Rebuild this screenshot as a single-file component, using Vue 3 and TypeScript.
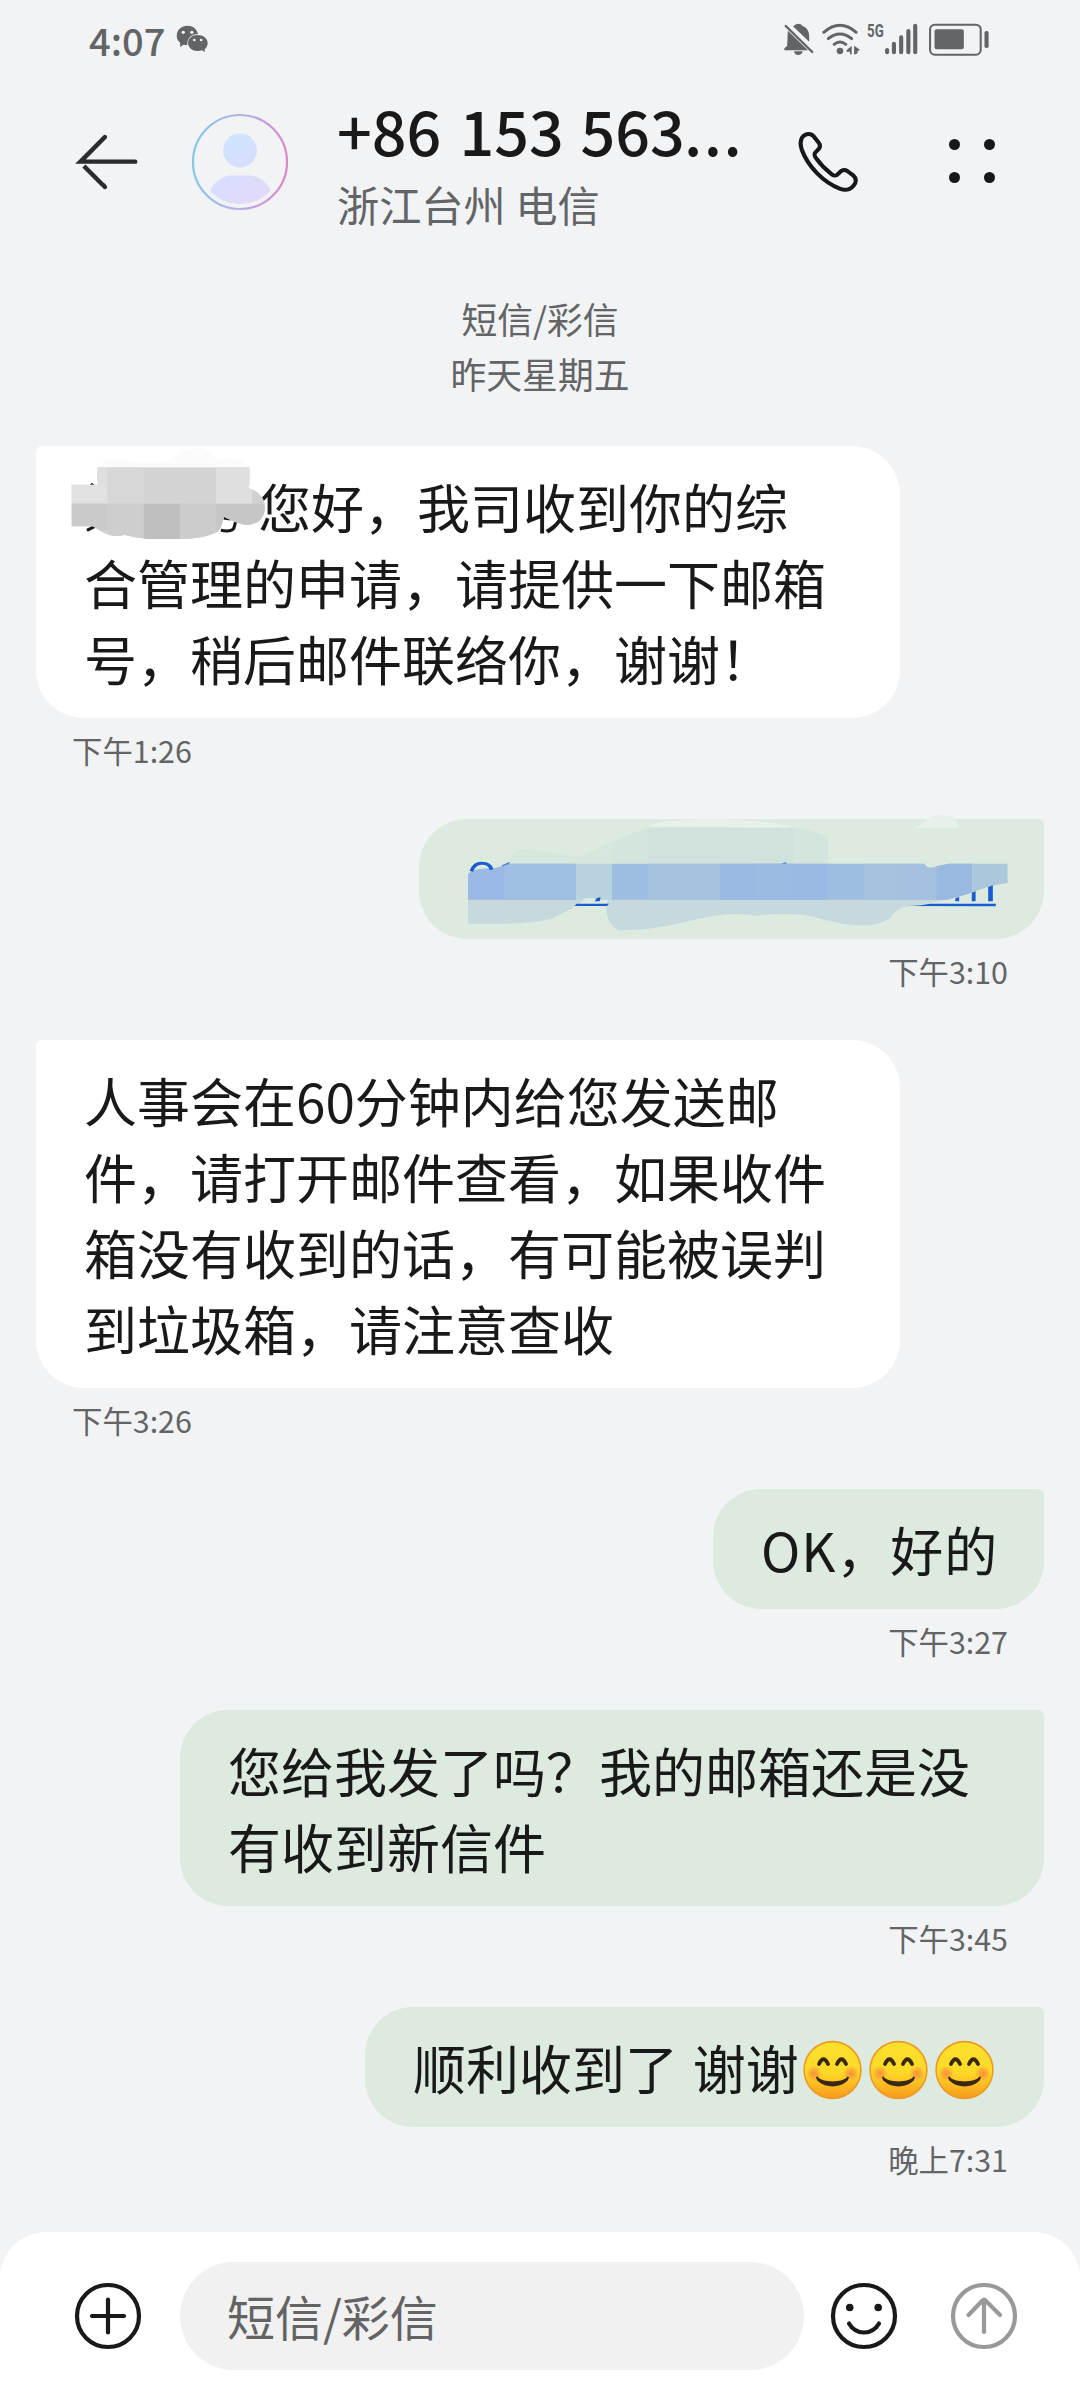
<script setup lang="ts">
interface Message {
  id: number
  side: 'in' | 'out'
  lines: string[]
  time: string
  width: number
  emojis?: number
  mask?: 'name' | 'link'
}

const messages: Message[] = [
  { id: 1, side: 'in', lines: ['您好，我司收到你的综', '合管理的申请，请提供一下邮箱', '号，稍后邮件联络你，谢谢！'], time: '下午1:26', width: 864, mask: 'name' },
  { id: 2, side: 'out', lines: [], time: '下午3:10', width: 625, mask: 'link' },
  { id: 3, side: 'in', lines: ['人事会在60分钟内给您发送邮', '件，请打开邮件查看，如果收件', '箱没有收到的话，有可能被误判', '到垃圾箱，请注意查收'], time: '下午3:26', width: 864 },
  { id: 4, side: 'out', lines: ['OK，好的'], time: '下午3:27', width: 331 },
  { id: 5, side: 'out', lines: ['您给我发了吗？我的邮箱还是没', '有收到新信件'], time: '下午3:45', width: 864 },
  { id: 6, side: 'out', lines: ['顺利收到了 谢谢'], time: '晚上7:31', width: 679, emojis: 3 },
]
</script>

<template>
  <div class="screen">
    <div class="status">
      <span class="clock">4:07</span>
      <svg class="wechat" viewBox="508 72 100 88" preserveAspectRatio="none">
        <path fill="#636466" d="M544 77c-17 0-31 13-31 30 0 9 4 16 10 21l0 13 10-7c4 1 8 1 11 1-2-19 12-33 31-33-3-15-15-25-31-25z" />
        <path fill="#636466" d="M574 105c-16 0-28 10-28 24s12 24 28 24c5 0 9-1 12-2l9 5-1-8c5-4 9-11 9-19 0-14-13-24-29-24z" />
        <g fill="#f2f3f5"><circle cx="532" cy="97" r="5" /><circle cx="557" cy="97" r="5" /><circle cx="564" cy="120" r="4" /><circle cx="584" cy="120" r="4" /></g>
      </svg>
      <div class="indicators">
        <svg class="bell" viewBox="704 66 92 102" preserveAspectRatio="none">
          <path fill="#636466" d="M718 92L772 146L776 151H708V145L716 138zM738 76Q740 71 748 71Q757 71 760 77Q779 84 780 106V125L733 79zM736 154H761Q759 165 748 165Q738 165 736 154z" />
          <path fill="none" stroke="#636466" stroke-width="7" stroke-linecap="round" d="M712 78L789 156" />
        </svg>
        <svg class="wifi" viewBox="816 66 116 102" preserveAspectRatio="none">
          <g fill="none" stroke="#636466" stroke-width="8.500" stroke-linecap="round">
            <path d="M824 97Q871 55 918 97" /><path d="M837 116Q871 88 905 116" /><path d="M854 133Q871 119 888 133" />
          </g>
          <circle cx="871" cy="153" r="9.500" fill="#636466" />
          <path fill="#636466" d="M905 137V163H900V155H890V151zM912 137L929 149 922 154V159L917 163H912z" />
        </svg>
        <span class="net">5G</span>
        <svg class="bars" viewBox="998 66 102 102" preserveAspectRatio="none">
          <g stroke="#636466" stroke-width="12" stroke-linecap="round">
            <path d="M1007 150V157M1027 131V157M1048 112V157M1069 93V157M1089 77V157" />
          </g>
        </svg>
        <svg class="battery" viewBox="1128 66 182 104" preserveAspectRatio="none">
          <rect x="1134" y="74" width="147" height="90" rx="14" fill="none" stroke="#636466" stroke-width="6" />
          <rect x="1147" y="88" width="85" height="60" rx="6" fill="#636466" />
          <rect x="1292" y="93" width="12" height="51" rx="5" fill="#636466" />
        </svg>
      </div>
    </div>

    <header class="header">
      <svg class="back" viewBox="220 396 186 180" preserveAspectRatio="none">
        <g fill="none" stroke="#2a2b2d" stroke-width="13" stroke-linecap="round">
          <path d="M304 411L233 485H392" /><path stroke-linecap="butt" d="M243 498L298 555" /><path d="M300 556L304 561" />
        </g>
      </svg>
      <svg class="avatar" viewBox="0 0 98 98">
        <defs>
          <linearGradient id="ring" x1="0" x2="1" y1="0.450" y2="0.550">
            <stop offset="0" stop-color="#82c9ea" /><stop offset="0.500" stop-color="#b7b0e8" /><stop offset="1" stop-color="#db86cc" />
          </linearGradient>
          <linearGradient id="person" gradientUnits="userSpaceOnUse" x1="25" y1="20" x2="75" y2="90">
            <stop offset="0" stop-color="#cbe7ff" /><stop offset="0.500" stop-color="#d8defe" /><stop offset="1" stop-color="#e6d9f8" />
          </linearGradient>
        </defs>
        <circle cx="49" cy="49" r="47" fill="none" stroke="url(#ring)" stroke-width="2.200" />
        <circle cx="49" cy="37.500" r="17" fill="url(#person)" />
        <path fill="url(#person)" d="M19 77Q25 66 37 62.500H61Q73 65 80 77Q68 91 49 91T19 77z" />
      </svg>
      <div class="contact">
        <div class="number"><span class="country">+86 </span><span class="prefix">153 </span><span class="rest">563</span><span class="dots">...</span></div>
        <div class="region">浙江台州 电信</div>
      </div>
      <svg class="phone" viewBox="740 390 190 192" preserveAspectRatio="none">
        <path fill="none" stroke="#17181a" stroke-width="12" stroke-linejoin="round" d="M761 412C770 400 786 398 794 409L809 428C816 437 812 445 804 452C796 459 794 464 800 473C811 489 829 509 847 523C855 529 860 528 866 521C875 510 883 507 892 513L909 526C919 535 919 547 910 557C900 569 885 572 870 566C822 546 778 500 760 450C755 435 755 422 761 412z" />
      </svg>
      <div class="more"><i></i><i></i><i></i><i></i></div>
    </header>

    <main class="thread">
      <div class="day"><div>短信/彩信</div><div>昨天星期五</div></div>
      <section v-for="m in messages" :key="m.id" class="message" :class="m.side">
        <div class="bubble" :class="{ reply: m.id === 4 }" :style="{ width: m.width + 'px' }">
          <div v-if="!m.lines.length" class="line"></div>
          <div v-for="(line, i) in m.lines" :key="i" class="line" :class="{ thanks: m.emojis }">
            <span v-if="m.mask === 'name' && i === 0" class="hidden-name"></span><span class="words">{{ line }}</span>
            <template v-if="m.emojis">
              <svg v-for="n in m.emojis" :key="n" class="emoji" viewBox="0 0 66 60">
                <defs>
                  <linearGradient id="face" x1="0" y1="0" x2="0" y2="1">
                    <stop offset="0" stop-color="#fde12c" /><stop offset="0.550" stop-color="#fdd927" /><stop offset="1" stop-color="#f8991d" />
                  </linearGradient>
                  <radialGradient id="blush"><stop offset="0" stop-color="#f7853c" stop-opacity="0.850" /><stop offset="0.500" stop-color="#f88f3a" stop-opacity="0.600" /><stop offset="1" stop-color="#f9a030" stop-opacity="0" /></radialGradient>
                </defs>
                <circle cx="33.500" cy="30" r="28.400" fill="url(#face)" stroke="#ee9a20" stroke-width="1.600" />
                <circle cx="15" cy="33.500" r="8" fill="url(#blush)" /><circle cx="52" cy="33.500" r="8" fill="url(#blush)" />
                <g fill="none" stroke="#3a2810" stroke-linecap="round">
                  <path stroke-width="3.800" d="M20 24Q24.500 14.500 29 24M38 24Q42.500 14.500 47 24" />
                </g>
                <path fill="#3a2810" d="M18.500 36.500C23 43 44 43 48.500 36.500C51 36 49.500 40 47.500 41.500C40 48 27 48 19.500 41.500C17.500 40 16 36 18.500 36.500z" />
              </svg>
            </template>
          </div>

          <svg v-if="m.mask === 'name'" class="name-mask" viewBox="140 490 580 300" preserveAspectRatio="none">
            <defs>
              <clipPath id="smudge"><path d="M150 615H228Q222 602 226 563H667V602Q668 620 663 625Q714 640 712 690Q704 736 655 736Q622 728 592 711Q590 735 576 755Q540 778 465 778H370Q330 773 305 766Q270 775 240 758L212 740H150z" /></clipPath>
            </defs>
            <path fill="#fbfbfb" d="M225 563Q240 535 300 538Q370 560 440 540Q480 500 530 505Q560 515 570 540Q640 528 667 563z" />
            <path fill="none" stroke="#17181a" stroke-width="9" d="M206 613L222 625M195 752L218 740M584 752Q615 758 622 745L628 722M592 715L612 718" />
            <g clip-path="url(#smudge)">
              <rect x="140" y="550" width="580" height="240" fill="#d3d3d3" />
              <rect x="140" y="610" width="115" height="62" fill="#e1e1e1" />
              <rect x="225" y="560" width="30" height="60" fill="#dfdfdf" />
              <rect x="255" y="560" width="105" height="112" fill="#d7d7d7" />
              <rect x="570" y="560" width="105" height="112" fill="#dfdfdf" />
              <rect x="675" y="600" width="45" height="72" fill="#d1d1d1" />
              <rect x="140" y="672" width="115" height="80" fill="#cacaca" />
              <rect x="255" y="672" width="105" height="110" fill="#cecece" />
              <rect x="360" y="672" width="106" height="110" fill="#bfbfbf" />
              <rect x="466" y="672" width="104" height="110" fill="#cccccc" />
              <rect x="570" y="672" width="150" height="110" fill="#c6c6c6" />
            </g>
          </svg>

          <svg v-if="m.mask === 'link'" class="link-mask" viewBox="150 40 1310 370" preserveAspectRatio="none">
            <path fill="#e8f0ea" d="M585 80Q640 57 740 59Q860 58 940 84zM1222 84Q1242 78 1255 55Q1285 35 1315 55Q1326 65 1328 84z" />
            <path fill="#d4e5de" d="M418 178Q500 130 500 130Q530 110 590 84H935Q980 92 1017 110V192H418z" />
            <path fill="#d1e2dd" d="M590 192V84H935V192z" />
            <path fill="#d8e7dd" d="M262 192Q265 150 295 148Q360 155 415 171Q450 168 504 130V192z" />
            <path fill="#c6dade" d="M162 298H1310Q1260 310 1200 322Q1175 330 1165 355Q1140 378 1095 377Q1050 375 1000 357Q940 335 850 348Q780 336 700 360Q610 392 520 392Q490 375 490 320L495 298H440Q415 325 360 357Q310 372 250 372H162z" />
            <path fill="#b8d2df" d="M418 192H504V300H470Q455 288 425 300H418z" />
            <path fill="#99b8e3" d="M162 300V222Q180 203 220 207L262 192H418V300z" />
            <path fill="#9ebee2" d="M247 197L262 192H418V300H247z" />
            <path fill="#9ebee1" d="M504 192H1245Q1257 212 1275 200L1305 192H1360V278Q1335 290 1300 300H504z" />
            <path fill="#a5c2df" d="M590 192H761V300H590zM1102 192H1188V300H1102z" />
            <path fill="#9ab9e2" d="M761 192H1016V300H761z" />
            <path fill="#9cbbe2" d="M845 192H932V300H845z" />
            <path fill="#a4c1e0" d="M1188 192H1245Q1257 212 1275 200V300H1188z" />
            <path fill="#9ab9e0" d="M1275 200L1305 192H1360V278Q1335 290 1300 300H1275z" />
            <path fill="#aac7dc" d="M1360 192H1444V250Q1415 253 1360 278z" />
            <path fill="none" stroke="#185bd2" stroke-width="9" d="M170 215Q177 190 195 191Q214 191 218 210" />
            <path fill="#185bd2" d="M415 319L420 312H497L492 319zM1205 319Q1240 317 1260 312H1416V320zM468 295L477 293 475 305H463zM1320 296L1329 292V305H1320zM1359 279L1368 275V305H1359zM1398 262L1409 257V305H1398z" />
            <path fill="#4d80d6" d="M242 197L262 186 259 193 244 200zM906 192L918 187V192z" />
          </svg>
        </div>
        <div class="time">{{ m.time }}</div>
      </section>
    </main>

    <footer class="composer">
      <svg class="round" viewBox="0 0 68 68">
        <g fill="none" stroke="#191919" stroke-width="4.200"><circle cx="34" cy="34" r="31" /><path stroke-linecap="round" d="M34 17.500V50.500M18 34H50" /></g>
      </svg>
      <div class="field">短信/彩信</div>
      <svg class="round smile" viewBox="0 0 68 68">
        <g fill="none" stroke="#191919" stroke-width="4.200"><circle cx="34" cy="34" r="31" /><path stroke-linecap="round" d="M19 41.500C26 53.500 42 53.500 49 41.500" /></g>
        <circle cx="19.700" cy="25.500" r="3.800" fill="#191919" /><circle cx="48.200" cy="25.500" r="3.800" fill="#191919" />
      </svg>
      <svg class="round send" viewBox="0 0 68 68">
        <g fill="none" stroke="#999" stroke-width="4.200"><circle cx="34" cy="34" r="31" /><path stroke-linecap="round" stroke-linejoin="round" d="M34 50V18M18.500 33L32.500 18.500Q34 17 35.500 18.500L50 33" /></g>
      </svg>
    </footer>
  </div>
</template>

<style>
body { background: #f2f3f5; }
</style>

<style scoped>
.screen {
  display: flex;
  flex-direction: column;
  width: 1080px;
  height: 2400px;
  overflow: hidden;
  background: #f2f3f5;
  color: #191919;
  font-family: "Noto Sans CJK SC", "Noto Sans", sans-serif;
}
svg { display: block; flex: none; overflow: visible; }

.status { display: flex; height: 80px; padding-left: 89px; color: #636466; }
.clock { width: 86px; height: 80px; font-size: 38px; font-weight: 500; line-height: 79px; }
.wechat { width: 34.4px; height: 29.3px; margin-top: 24px; }
.indicators { display: flex; margin: 22px 89px 0 auto; }
.bell { width: 31.7px; height: 34px; }
.wifi { width: 40px; height: 34px; margin-left: 6.9px; }
.net { width: 17px; margin-left: 6px; font: 700 19px/18px "Roboto", sans-serif; transform: scaleX(0.7); transform-origin: left; height: 18px; }
.bars { width: 35px; height: 34px; margin-left: -0.4px; }
.battery { width: 62.7px; height: 34.7px; margin-left: 9.6px; }

.header { display: flex; align-items: center; height: 164px; padding-left: 76px; }
.back { width: 64px; height: 60px; }
.avatar { width: 98px; height: 98px; margin-left: 51px; }
.contact { display: flex; flex-direction: column; width: 410px; margin-left: 48px; height: 140px; }
.number { display: flex; height: 76px; font-size: 61px; font-weight: 500; line-height: 75px; white-space: pre; }
.country { width: 122.5px; }
.prefix { width: 121px; }
.rest { width: 103.5px; }
.dots { letter-spacing: 1.6px; }
.region { color: #636466; font-size: 42.2px; line-height: 60px; margin-top: 7px; }
.phone { width: 65.4px; height: 64px; margin-left: 48px; }
.more { display: grid; grid-template-columns: 11px 11px; gap: 22px 23.600px; margin: -2px 0 0 89px; }
.more i { width: 11px; height: 11px; border-radius: 50%; background: #17181a; }

.thread { display: flex; flex-direction: column; padding: 46.5px 36px 0; }
.day { height: 111px; margin-bottom: 44.5px; color: #636466; text-align: center; font-size: 35.8px; line-height: 55.5px; }
.message { display: flex; flex-direction: column; align-items: flex-start; }
.message.out { align-items: flex-end; }
.bubble { position: relative; box-sizing: border-box; padding: 22px 0 22px 48px; border-radius: 6px 48px 48px 48px; background: #fff; }
.out .bubble { border-radius: 48px 6px 48px 48px; background: #dceadf; }
.line { display: flex; align-items: center; height: 76px; font-size: 53px; line-height: 76px; white-space: pre; }
.reply .line { letter-spacing: 0.9px; }
.thanks { word-spacing: 3px; }
.hidden-name { width: 174px; }
.emoji { width: 66px; height: 60px; margin-top: 5px; }
.time { height: 40px; margin: 12px 36px 49px; color: #636466; font-size: 30.4px; line-height: 40px; }
.name-mask { position: absolute; left: 32.2px; top: -2.7px; width: 199.7px; height: 100px; }
.link-mask { position: absolute; left: 44.1px; top: -5.7px; width: 551.3px; height: 123.3px; }

.composer { display: flex; align-items: flex-start; box-sizing: border-box; height: 168px; margin-top: auto; padding: 30px 0 0 74px; border-radius: 46px 46px 0 0; background: #fff; }
.round { width: 68px; height: 68px; margin-top: 20px; }
.field { box-sizing: border-box; width: 624px; height: 108px; margin-left: 38px; padding-left: 47px; border-radius: 54px; background: #f1f1f1; color: #636363; font-size: 48px; line-height: 106px; }
.smile { margin-left: 26px; }
.send { margin-left: 52px; }
</style>
